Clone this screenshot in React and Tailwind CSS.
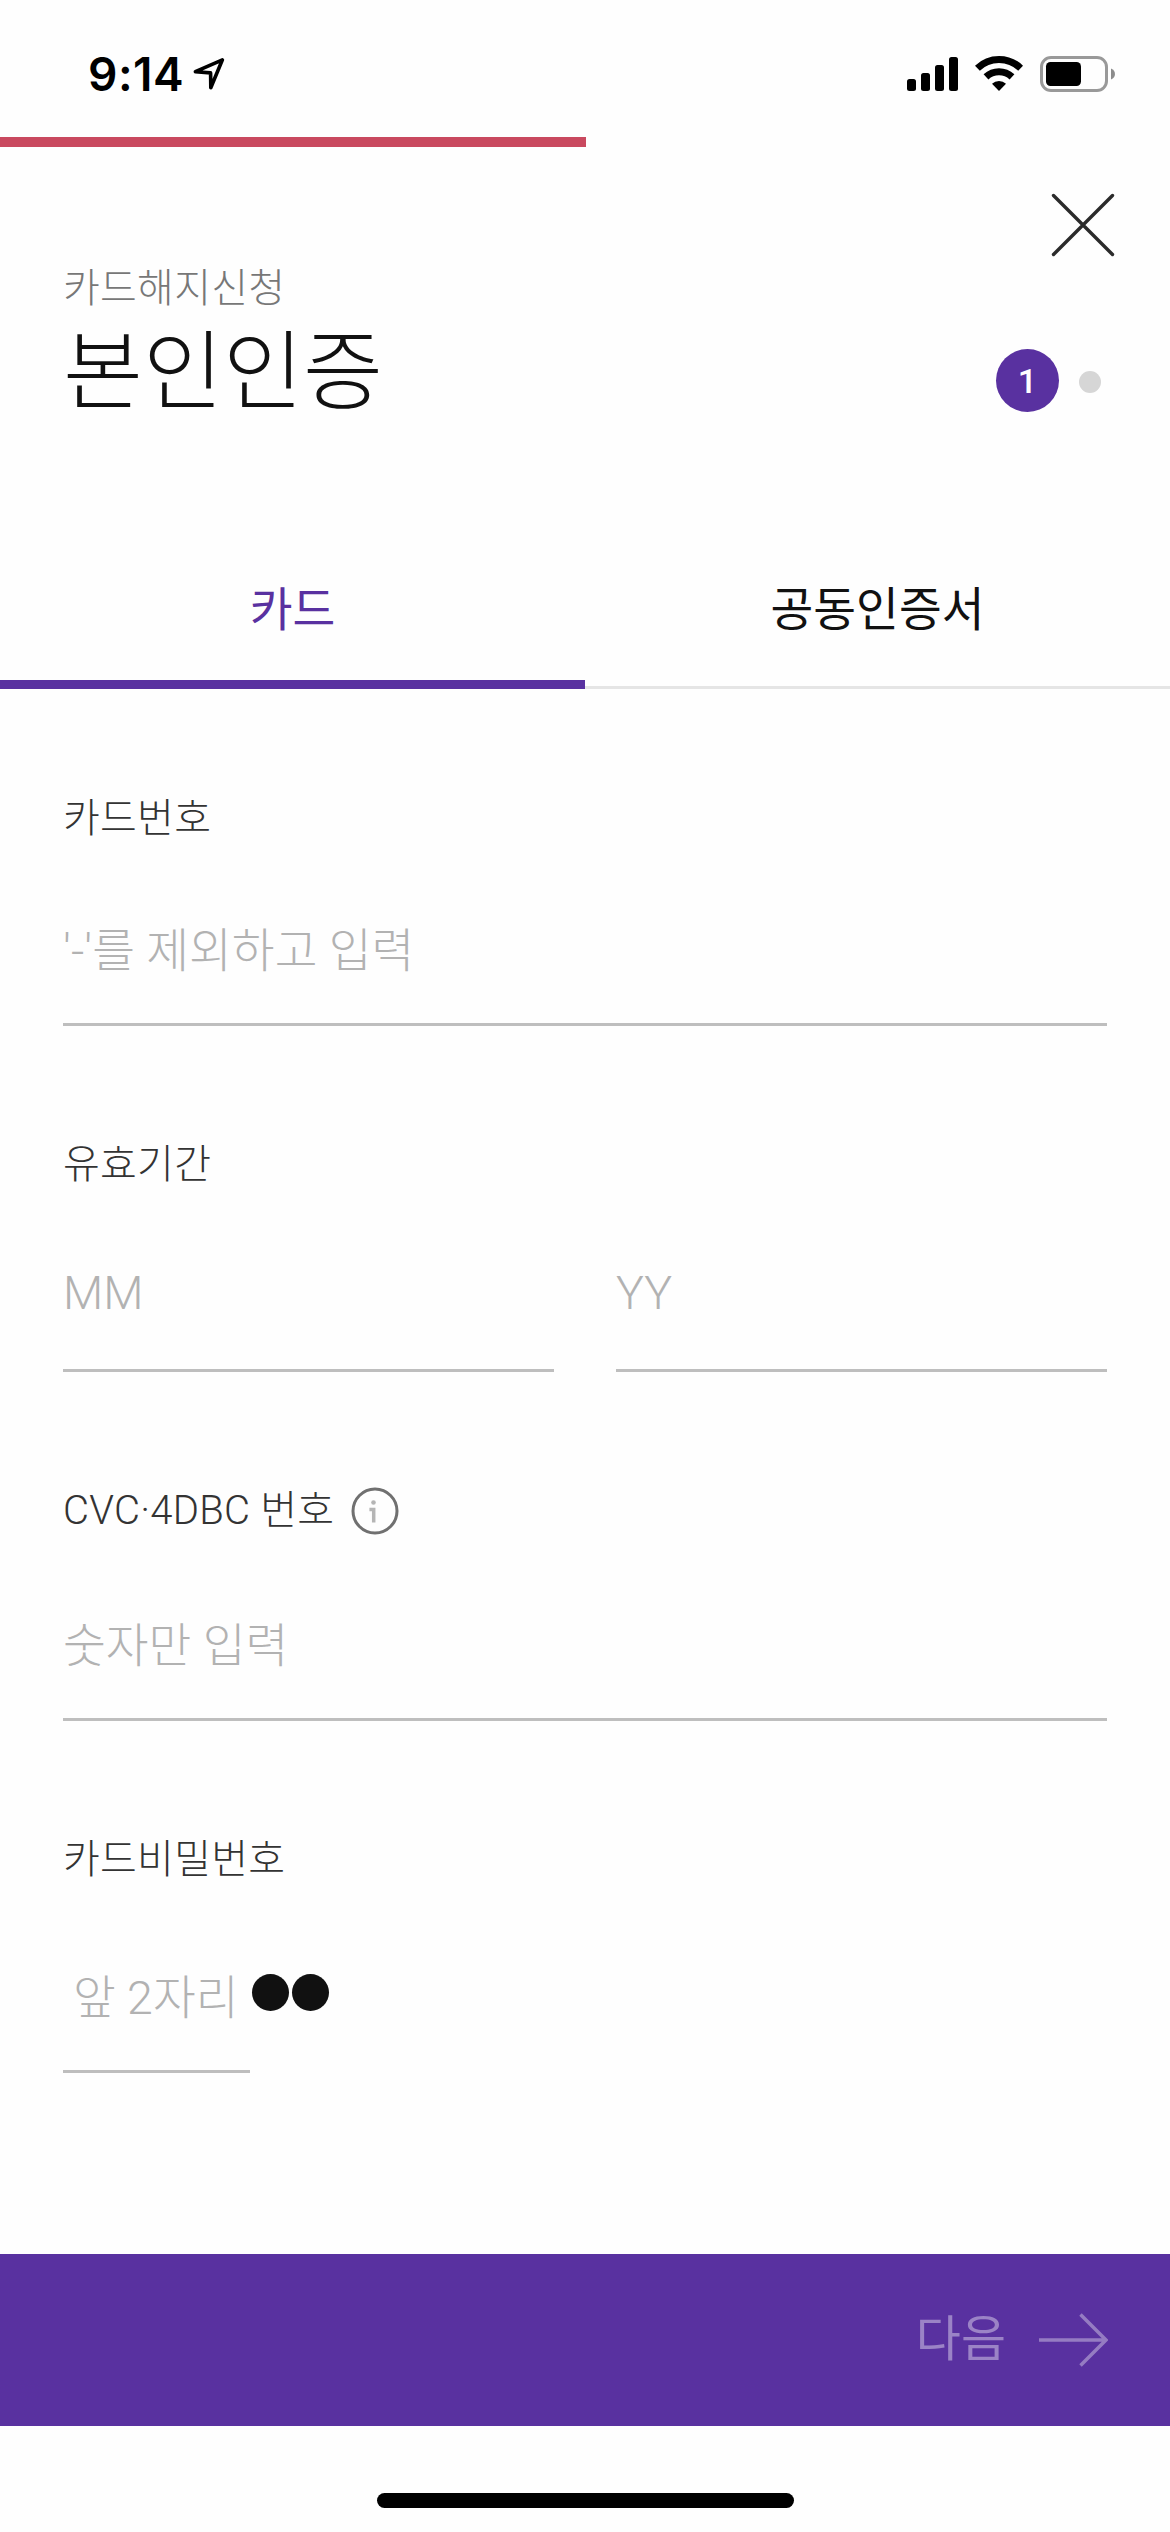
import React from 'react';

const tabs = [
  { id: "card", label: "카드" },
  { id: "cert", label: "공동인증서" },
];

function StatusBar() {
  return (
    <header className="flex h-[137px] shrink-0 items-start justify-between pl-[88px] pr-[54px] pt-[46px] text-black">
      <div className="flex items-center">
        <span className="w-[95px] whitespace-nowrap font-[Inter,sans-serif] text-[46px] font-semibold leading-[56px] tracking-[0.5px]">9:14</span>
        <svg className="ml-[9px]" width="34" height="34" viewBox="0 0 34 34" fill="none" stroke="currentColor" strokeWidth="3.6" strokeLinejoin="round">
          <path d="M30.400 2.800 3.400 14.700l15.200 1.200.2 14.900z" />
        </svg>
      </div>
      <div className="flex items-start pt-[9px]">
        <svg className="mt-[2px]" width="51" height="34" viewBox="0 0 51 34" fill="currentColor">
          <rect x="0" y="22" width="9" height="12" rx="2.5" />
          <rect x="14" y="16" width="9" height="18" rx="2.5" />
          <rect x="28" y="8" width="9" height="26" rx="2.5" />
          <rect x="42" y="0" width="9" height="34" rx="2.5" />
        </svg>
        <svg className="ml-[17px]" width="48" height="36" viewBox="0 0 48 36" fill="none" stroke="currentColor">
          <path d="M2.400 13.200a31 31 0 0 1 43.200 0" strokeWidth="7" />
          <path d="M11 21.900a19 19 0 0 1 26 0" strokeWidth="7" />
          <path d="M24 36l-7-7.200a10 10 0 0 1 14 0z" fill="currentColor" stroke="none" />
        </svg>
        <svg className="ml-[17px] mt-[1px]" width="76" height="36" viewBox="0 0 76 36">
          <rect x="1.5" y="1.5" width="65" height="33" rx="9.5" fill="none" stroke="#999" strokeWidth="3" />
          <rect x="6" y="6" width="35" height="24" rx="4.5" fill="#000" />
          <path d="M71 12.500c5.300 1.800 5.300 9.200 0 11z" fill="#8c8c8c" />
        </svg>
      </div>
    </header>
  );
}

function Label({ children }) {
  return (
    <div className="flex h-[60px] items-center text-[40px] leading-[60px] tracking-[0.25px] text-[#333]">{children}</div>
  );
}

function Field({ placeholder, className = "" }) {
  return (
    <div className={`border-b-[3px] border-[#bebebe] text-[46.5px] leading-[72px] text-[#b2b2b2] ${className}`}>
      {placeholder}
    </div>
  );
}

export default function App() {
  const active = "card";

  return (
    <div className="flex h-[2532px] w-[1170px] flex-col overflow-hidden bg-[#fefefe] font-[Roboto,'Noto_Sans_CJK_KR',sans-serif] font-light text-[#111]">
      <StatusBar />

      {/* 진행률 */}
      <div className="h-[10px] w-[586px] shrink-0 bg-[#c9495f]" />

      <div className="flex h-[110px] shrink-0 items-end justify-end pr-[55px]">
        <svg width="64" height="64" viewBox="0 0 64 64" fill="none" stroke="#2b2b2b" strokeWidth="3.4" strokeLinecap="round">
          <path d="M2.500 2.500 61.500 61.500M61.500 2.500 2.500 61.500" />
        </svg>
      </div>

      <div className="flex h-[293px] shrink-0 justify-between pl-[63px] pr-[69px]">
        <div className="pt-[2px]">
          <p className="text-[40px] leading-[60px] tracking-[0.25px] text-[#777]">카드해지신청</p>
          <h1 className="text-[87px] leading-[108px]">본인인증</h1>
        </div>
        <div className="mt-[92px] flex h-[63px] items-center gap-[20px]">
          <span className="flex h-[63px] w-[63px] items-center justify-center rounded-full bg-[#5931a0] text-[34px] font-medium leading-none text-white">1</span>
          <span className="mt-[3px] h-[22px] w-[22px] rounded-full bg-[#d6d6d6]" />
        </div>
      </div>

      <nav className="flex h-[139px] shrink-0">
        {tabs.map((tab) => (
          <button
            key={tab.id}
            className={
              tab.id === active
                ? "w-1/2 border-b-[9px] border-[#5931a0] pb-[10px] text-[46.5px] font-normal leading-[72px] text-[#5931a0]"
                : "w-1/2 border-b-[3px] border-[#e5e5e5] pb-[16px] text-[46.5px] font-normal leading-[72px] text-[#111]"
            }
          >
            {tab.label}
          </button>
        ))}
      </nav>

      <main className="flex grow flex-col px-[63px] pt-[100px]">
        <section className="h-[346px]">
          <Label>카드번호</Label>
          <Field placeholder="'-'를 제외하고 입력" className="mt-[66px] pb-[36px]" />
        </section>

        <section className="h-[346px]">
          <Label>유효기간</Label>
          <div className="mt-[62px] flex gap-[62px]">
            <Field placeholder="MM" className="flex-1 pb-[40px]" />
            <Field placeholder="YY" className="flex-1 pb-[40px]" />
          </div>
        </section>

        <section className="h-[349px]">
          <Label>
            CVC·4DBC 번호
            <svg className="ml-[17px]" width="48" height="48" viewBox="0 0 48 48" fill="none">
              <circle cx="24" cy="24" r="22" stroke="#707070" strokeWidth="3" />
              <path d="M18.400 22.500h4.300v13" stroke="#b5b5b5" strokeWidth="3.5" />
              <circle cx="22.5" cy="15.5" r="2.300" fill="#b5b5b5" />
            </svg>
          </Label>
          <Field placeholder="숫자만 입력" className="mt-[69px] pb-[36px]" />
        </section>

        <section>
          <Label>카드비밀번호</Label>
          <div className="mt-[72px] flex">
            <Field placeholder="앞 2자리" className="w-[187px] whitespace-nowrap pb-[36px] pl-[10px]" />
            <div className="mt-[12px] flex gap-[3px] pl-[2px]">
              <span className="h-[37px] w-[37px] rounded-full bg-[#111]" />
              <span className="h-[37px] w-[37px] rounded-full bg-[#111]" />
            </div>
          </div>
        </section>
      </main>

      <button className="flex h-[172px] shrink-0 items-center justify-end bg-[#5931a0] pr-[62px] text-[49px] font-normal leading-[80px] text-[#9b83c6]">
        다음
        <svg className="ml-[33px]" width="69" height="54" viewBox="0 0 69 54" fill="none" stroke="#957cc2" strokeWidth="3.5">
          <path d="M0 27h66M41.500 1.500 67 27 41.500 52.500" />
        </svg>
      </button>

      <footer className="flex h-[106px] shrink-0 justify-center pt-[67px]">
        <div className="h-[15px] w-[417px] rounded-full bg-black" />
      </footer>
    </div>
  );
}
